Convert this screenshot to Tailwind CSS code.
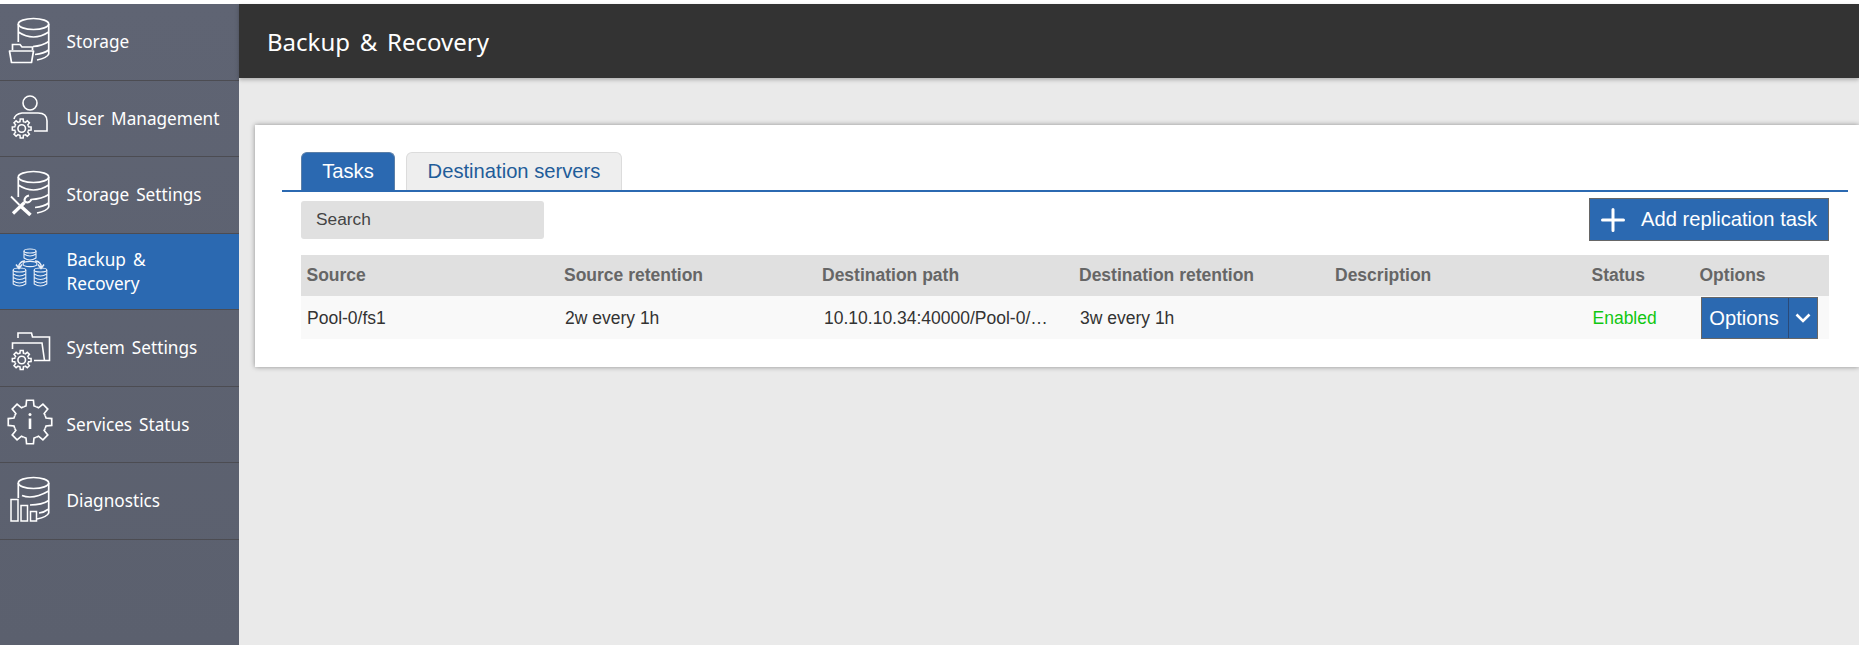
<!DOCTYPE html>
<html>
<head>
<meta charset="utf-8">
<script src="https://cdn.jsdelivr.net/npm/@tailwindcss/browser@4"></script>
<title>Backup &amp; Recovery</title>
</head>
<body class="m-0 bg-white font-['Liberation_Sans',sans-serif]">
<svg class="absolute w-0 h-0" aria-hidden="true"><defs>
<path id="t" d="M6.93 -2.87L7.28 -1.81L9.88 -1.56L9.88 1.56L7.28 1.81L6.93 2.87"/>
<g id="gear">
<use href="#t"/><use href="#t" transform="rotate(45)"/><use href="#t" transform="rotate(90)"/><use href="#t" transform="rotate(135)"/><use href="#t" transform="rotate(180)"/><use href="#t" transform="rotate(225)"/><use href="#t" transform="rotate(270)"/><use href="#t" transform="rotate(315)"/>
</g>
<g id="cyl"><ellipse cx="33.5" cy="20" rx="15.2" ry="5.5"/><path d="M48.7 20V50Q47 54 37 56"/></g>
</defs></svg>
<div class="h-[645px] w-[1859px] overflow-hidden pt-[4px] flex">
  <aside class="w-[239px] h-full shrink-0 bg-gradient-to-b from-[#5f6473] to-[#5b606e] font-['Noto_Sans',sans-serif] text-[17.2px] text-white [word-spacing:2.5px]">
    <a class="flex items-center h-[76.5px] border-b border-[#4c4c52]">
      <svg class="w-[64px] h-[76px] shrink-0" viewBox="0 0 64 76" fill="none" stroke="#fff" stroke-width="1.7"><use href="#cyl"/><path d="M18.3 20V38M18.3 28Q33.5 38 48.7 28M33 42.5Q42 42 48.7 37.5M35 50.5Q44 49.5 48.7 46"/><path d="M12.5 46V40.5H20L22 43H32.5V46"/><path d="M9.5 47H33.5L31.5 58.5H11.5Z" stroke-linejoin="round"/></svg>
      <span class="pl-[2.5px] pt-[1px]">Storage</span>
    </a>
    <a class="flex items-center h-[76.5px] border-b border-[#4c4c52]">
      <svg class="w-[64px] h-[76px] shrink-0" viewBox="0 0 64 76" fill="none" stroke="#fff" stroke-width="1.6"><circle cx="30" cy="23" r="7"/><path d="M14 39Q15 34 22 33H38Q47 33 47 41V51H34"/><use href="#gear" transform="translate(21.7 48.5) scale(.95)"/><circle cx="21.7" cy="48.5" r="3.8"/></svg>
      <span class="pl-[2.5px] pt-[1px]">User Management</span>
    </a>
    <a class="flex items-center h-[76.5px] border-b border-[#4c4c52]">
      <svg class="w-[64px] h-[76px] shrink-0" viewBox="0 0 64 76" fill="none" stroke="#fff" stroke-width="1.7"><use href="#cyl"/><path d="M18.3 20V40M18.3 28Q33.5 38 48.7 28M31 42.5Q42 42 48.7 37.5M35 50.5Q44 49.5 48.7 46"/><path d="M11 39.5L19.5 48" stroke-width="1.8"/><path d="M20.5 49L30.5 58" stroke-width="3.6"/><path d="M24.5 45.5L13 56.5" stroke-width="3.2"/><path d="M31.5 42Q30.5 45 27.5 45.5Q24.5 45.5 24.5 43Q25 39.5 29 38.5" stroke-width="2.1"/></svg>
      <span class="pl-[2.5px] pt-[1px]">Storage Settings</span>
    </a>
    <a class="flex items-center h-[76.5px] border-b border-[#4c4c52] bg-[#2b69b1]">
      <svg class="w-[64px] h-[76px] shrink-0" viewBox="0 0 64 76" fill="none" stroke="#e8eef7" stroke-width="1.1">
        <ellipse cx="30" cy="18" rx="6" ry="2"/><path d="M24 18V25Q30 29 36 25V18M24 21Q30 25 36 21"/>
        <ellipse cx="30" cy="31" rx="7" ry="2.6"/>
        <path d="M19 34V32Q21 28 25 28M41 34V32Q39 28 35 28M16 31.5L19 35.5L22 31.5M38 31.5L41 35.5L44 31.5" stroke-width="1.5"/>
        <ellipse cx="19.5" cy="37" rx="6.3" ry="2"/><path d="M13.2 37V51Q19.5 55 25.8 51V37M13.2 41Q19.5 45 25.8 41M13.2 44.5Q19.5 48.5 25.8 44.5M13.2 48Q19.5 52 25.8 48"/>
        <ellipse cx="40.5" cy="37" rx="6.3" ry="2"/><path d="M34.2 37V51Q40.5 55 46.8 51V37M34.2 41Q40.5 45 46.8 41M34.2 44.5Q40.5 48.5 46.8 44.5M34.2 48Q40.5 52 46.8 48"/>
      </svg>
      <span class="pl-[2.5px] pt-[1px] leading-[24px] w-[120px]">Backup &amp; Recovery</span>
    </a>
    <a class="flex items-center h-[76.5px] border-b border-[#4c4c52]">
      <svg class="w-[64px] h-[76px] shrink-0" viewBox="0 0 64 76" fill="none" stroke="#fff" stroke-width="1.6"><path d="M18 28V23H31.5L32.5 27H49.5V50.5H34"/><path d="M12.5 39L12.5 33H42L44.5 50.5"/><use href="#gear" transform="translate(21.7 50) scale(.95)"/><circle cx="21.7" cy="50" r="3.8"/></svg>
      <span class="pl-[2.5px] pt-[1px]">System Settings</span>
    </a>
    <a class="flex items-center h-[76.5px] border-b border-[#4c4c52]">
      <svg class="w-[64px] h-[76px] shrink-0" viewBox="0 0 64 76" fill="none" stroke="#fff"><use href="#gear" transform="translate(30 36) scale(2.2)" stroke-width=".75"/><path d="M30 32.5V43" stroke-width="2.6"/><circle cx="30" cy="28.5" r="1.5" fill="#fff" stroke="none"/></svg>
      <span class="pl-[2.5px] pt-[1px]">Services Status</span>
    </a>
    <a class="flex items-center h-[76.5px] border-b border-[#4c4c52]">
      <svg class="w-[64px] h-[76px] shrink-0" viewBox="0 0 64 76" fill="none" stroke="#fff" stroke-width="1.7"><use href="#cyl"/><path d="M18.3 20V35M22 32.5Q33 37 48.7 28M30 42Q42 42 48.7 37.5M39 50Q44 49.5 48.7 46"/><path d="M11 36.5H18V58H11ZM21 42.5H27.5V58H21ZM30.5 48.5H36.5V58H30.5Z" stroke-width="1.5"/></svg>
      <span class="pl-[2.5px] pt-[1px]">Diagnostics</span>
    </a>
  </aside>
  <main class="flex-1 flex flex-col min-w-0 bg-[#eaeaea]">
    <header class="h-[74px] shrink-0 bg-[#333333] text-white flex items-center pl-[28px] pt-[1px] font-['Noto_Sans',sans-serif] text-[24px] [word-spacing:3.5px] shadow-[0_2px_4px_rgba(0,0,0,0.25)]">Backup &amp; Recovery</header>
    <div class="pl-[16px] pt-[47px]">
      <section class="bg-white h-[242px] pt-[27px] pl-[27px] pr-[11px] shadow-[0_0_5px_rgba(0,0,0,0.4)]">
        <div class="flex gap-[11px] pl-[19px] h-[40px] border-b-2 border-[#2b69b1] text-[20.2px]">
          <div class="w-[94px] h-[38px] flex items-center justify-center rounded-t-[6px] bg-[#2b69b1] text-white border-t border-x border-[#5b7fa8]">Tasks</div>
          <div class="w-[216px] h-[38px] flex items-center justify-center rounded-t-[6px] bg-[#eeeeee] text-[#1f5c99] border-t border-x border-[#dcdcdc]">Destination servers</div>
        </div>
        <div class="px-[19px]">
          <div class="mt-[6px] h-[43px] flex items-center justify-between">
            <div class="w-[243px] h-[38px] rounded-[3px] bg-[#e0e0e0] text-[#444] text-[17.3px] pl-[15px] flex items-center">Search</div>
            <button class="w-[240px] h-[43px] bg-[#2b69b1] border border-[#666] text-white text-[20.2px] flex items-center pl-[11px]">
              <svg class="w-[24px] h-[24px] shrink-0" viewBox="0 0 24 24" stroke="#fff" stroke-width="3" stroke-linecap="round"><path d="M12 1.5V22.5M1.5 12H22.5"/></svg>
              <span class="pl-[16px]">Add replication task</span>
            </button>
          </div>
          <div class="mt-[14px] h-[41px] bg-[#e0e0e0] grid grid-cols-[257px_258px_257px_256px_257px_108px_135px] items-center text-[17.5px] font-bold text-[#666]">
            <div class="pl-[5.5px]">Source</div><div class="pl-[6px]">Source retention</div><div class="pl-[6px]">Destination path</div><div class="pl-[6px]">Destination retention</div><div class="pl-[6px]">Description</div><div class="pl-[5.5px]">Status</div><div class="pl-[5.5px]">Options</div>
          </div>
          <div class="h-[43px] pt-[1px] bg-[#f9f9f9] grid grid-cols-[257px_258px_257px_256px_257px_108px_135px] items-center text-[17.5px] text-[#333]">
            <div class="pl-[6px]">Pool-0/fs1</div><div class="pl-[7px]">2w every 1h</div><div class="pl-[8px] whitespace-nowrap">10.10.10.34:40000/Pool-0/…</div><div class="pl-[7px]">3w every 1h</div><div></div><div class="pl-[6.5px] text-[#11c711]">Enabled</div>
            <div class="pl-[7px] flex">
              <div class="h-[42px] -mt-[1px] w-[117px] flex bg-[#2b69b1] border border-[#666] text-white text-[20.2px]">
                <span class="w-[87px] pr-[2px] pt-[1px] flex items-center justify-center border-r border-[#2a4a78]">Options</span>
                <span class="flex-1 flex items-center justify-center"><svg class="w-[18px] h-[13px]" viewBox="0 0 18 13" fill="none" stroke="#fff" stroke-width="2.6"><path d="M2.5 3.5L9 10L15.5 3.5"/></svg></span>
              </div>
            </div>
          </div>
        </div>
      </section>
    </div>
  </main>
</div>
</body>
</html>
